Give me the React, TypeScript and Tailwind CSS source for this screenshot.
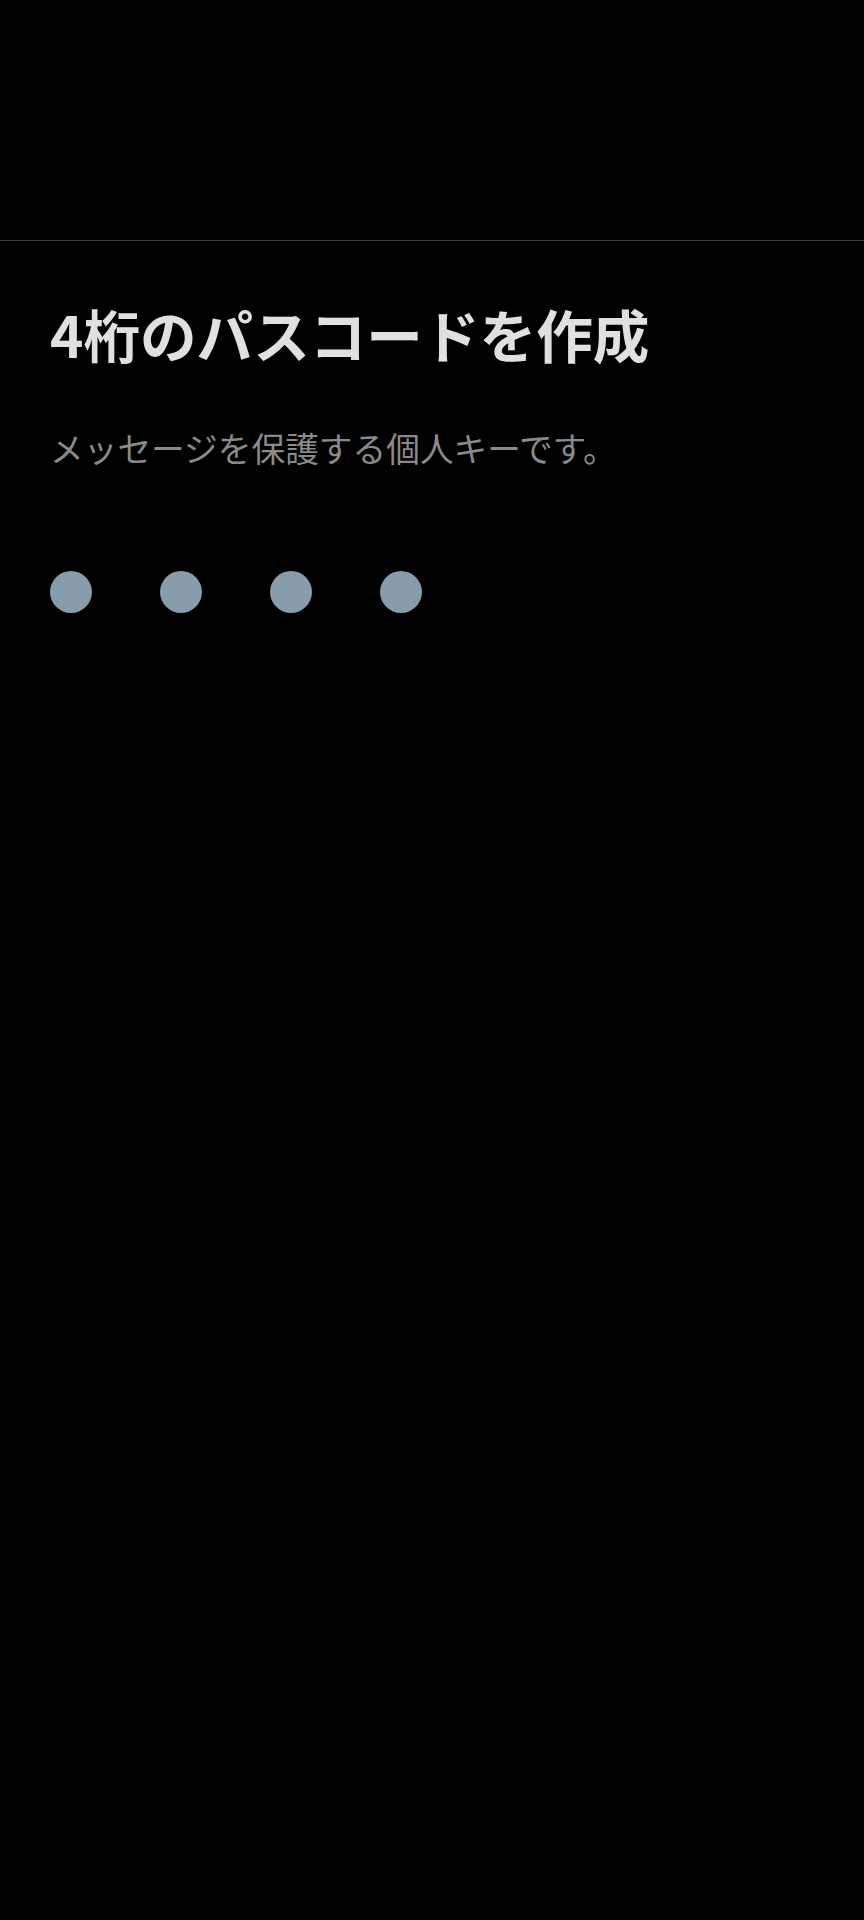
export default function App() {
  const font = { fontFamily: '"Noto Sans CJK JP", "Noto Sans", sans-serif' }
  return (
    <div className="min-h-[1920px] w-full bg-black" style={font}>
      <div className="h-[241px] border-b border-[#3a3a3a]" />
      <div className="px-[50px] pt-[58px]">
        <h1 className="text-[56.6px] leading-[68px] font-bold text-[#e0e0e0]">4桁のパスコードを作成</h1>
        <p className="mt-[58px] text-[33.7px] leading-[46px] text-[#8a8a8a]">メッセージを保護する個人キーです。</p>
        <div className="mt-[100px] flex gap-[68px]">
          <div className="w-[42px] h-[42px] rounded-full bg-[#889dac]" />
          <div className="w-[42px] h-[42px] rounded-full bg-[#889dac]" />
          <div className="w-[42px] h-[42px] rounded-full bg-[#889dac]" />
          <div className="w-[42px] h-[42px] rounded-full bg-[#889dac]" />
        </div>
      </div>
    </div>
  )
}
